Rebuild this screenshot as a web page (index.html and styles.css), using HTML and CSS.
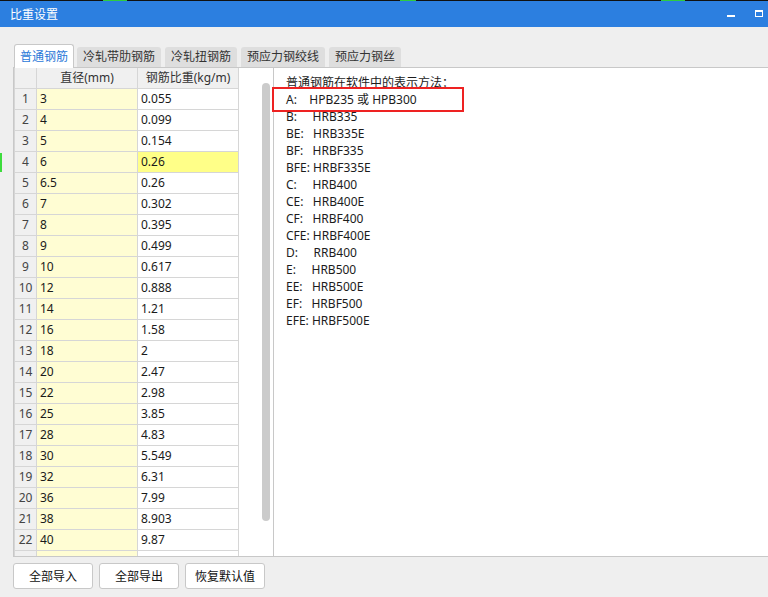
FILE: index.html
```html
<!DOCTYPE html>
<html lang="zh-CN">
<head>
    <meta charset="UTF-8">
    <title>比重设置</title>
    <link rel="stylesheet" href="styles.css">
</head>
<body>
    <div class="topline"></div>
    <div class="edge-mark"></div>

    <div class="titlebar">
        <span class="title">比重设置</span>
        <div class="win-btns">
            <span class="btn-min"></span>
            <span class="btn-max"></span>
        </div>
    </div>

    <div class="tabs">
        <div class="tab active">普通钢筋</div>
        <div class="tab">冷轧带肋钢筋</div>
        <div class="tab">冷轧扭钢筋</div>
        <div class="tab">预应力钢绞线</div>
        <div class="tab">预应力钢丝</div>
    </div>

    <div class="panel">
        <div class="left-pane">
            <div class="grid">
                <div class="hd"></div><div class="hd">直径(mm)</div><div class="hd">钢筋比重(kg/m)</div>
                <div class="no">1</div><div class="dia">3</div><div class="wt">0.055</div>
                <div class="no">2</div><div class="dia">4</div><div class="wt">0.099</div>
                <div class="no">3</div><div class="dia">5</div><div class="wt">0.154</div>
                <div class="no">4</div><div class="dia">6</div><div class="wt sel">0.26</div>
                <div class="no">5</div><div class="dia">6.5</div><div class="wt">0.26</div>
                <div class="no">6</div><div class="dia">7</div><div class="wt">0.302</div>
                <div class="no">7</div><div class="dia">8</div><div class="wt">0.395</div>
                <div class="no">8</div><div class="dia">9</div><div class="wt">0.499</div>
                <div class="no">9</div><div class="dia">10</div><div class="wt">0.617</div>
                <div class="no">10</div><div class="dia">12</div><div class="wt">0.888</div>
                <div class="no">11</div><div class="dia">14</div><div class="wt">1.21</div>
                <div class="no">12</div><div class="dia">16</div><div class="wt">1.58</div>
                <div class="no">13</div><div class="dia">18</div><div class="wt">2</div>
                <div class="no">14</div><div class="dia">20</div><div class="wt">2.47</div>
                <div class="no">15</div><div class="dia">22</div><div class="wt">2.98</div>
                <div class="no">16</div><div class="dia">25</div><div class="wt">3.85</div>
                <div class="no">17</div><div class="dia">28</div><div class="wt">4.83</div>
                <div class="no">18</div><div class="dia">30</div><div class="wt">5.549</div>
                <div class="no">19</div><div class="dia">32</div><div class="wt">6.31</div>
                <div class="no">20</div><div class="dia">36</div><div class="wt">7.99</div>
                <div class="no">21</div><div class="dia">38</div><div class="wt">8.903</div>
                <div class="no">22</div><div class="dia">40</div><div class="wt">9.87</div>
                <div class="no"></div><div class="dia"></div><div class="wt"></div>
            </div>
            <div class="thumb"></div>
        </div>

        <div class="right-pane">
            <div class="notes">普通钢筋在软件中的表示方法：
A:    HPB235 或 HPB300
B:     HRB335
BE:   HRB335E
BF:   HRBF335
BFE: HRBF335E
C:     HRB400
CE:   HRB400E
CF:   HRBF400
CFE: HRBF400E
D:     RRB400
E:     HRB500
EE:   HRB500E
EF:   HRBF500
EFE: HRBF500E</div>
            <div class="mark-box"></div>
        </div>
    </div>

    <div class="actions">
        <button>全部导入</button>
        <button>全部导出</button>
        <button>恢复默认值</button>
    </div>
</body>
</html>
```

FILE: styles.css
```css
body {
    margin: 0;
    background: #efefef;
    font-family: "Noto Sans", "Noto Sans CJK SC", sans-serif;
    font-size: 12px;
    color: #1a1a1a;
    height: 597px;
    overflow: hidden;
    position: relative;
}

.topline {
    height: 1px;
    background: linear-gradient(to right,
        #111 0, #111 103px, #2ecc40 103px, #2ecc40 127px,
        #111 127px, #111 400px, #2ecc40 400px, #2ecc40 416px,
        #111 416px, #111 661px, #2ecc40 661px, #2ecc40 685px, #111 685px);
}
.edge-mark {
    position: absolute;
    left: 0;
    top: 153px;
    width: 2px;
    height: 19px;
    background: #3ddc3d;
}

.titlebar {
    height: 26px;
    background: #2c7fe0;
    color: #fff;
    display: flex;
    align-items: center;
    justify-content: space-between;
    padding: 0 5px 0 10px;
}
.title {
    font-size: 12px;
    margin-top: -1px;
}
.win-btns {
    display: flex;
    align-items: flex-start;
    gap: 20px;
    height: 8px;
}
.btn-min {
    width: 8px;
    height: 2px;
    background: #fff;
    margin-top: 5px;
}
.btn-max {
    width: 6px;
    height: 4px;
    border: 1px solid #fff;
    border-top-width: 2px;
}

.tabs {
    height: 40px;
    display: flex;
    align-items: flex-end;
    gap: 4px;
    padding-left: 14px;
    position: relative;
    z-index: 1;
}
.tab {
    height: 20px;
    line-height: 20px;
    padding: 0 6px;
    background: #dedede;
    color: #333;
    border-radius: 3px 3px 0 0;
}
.tab.active {
    height: 23px;
    line-height: 24px;
    padding: 0 5px;
    background: #fff;
    color: #2b78d8;
    border: 1px solid #c8c8c8;
    border-bottom: none;
    margin-bottom: -1px;
    margin-right: -1px;
}

.panel {
    margin-left: 13px;
    height: 488px;
    border: 1px solid #c8c8c8;
    border-right: none;
    display: flex;
    background: #fff;
}

.left-pane {
    width: 259px;
    border-right: 1px solid #c8c8c8;
    display: flex;
    align-items: flex-start;
    overflow: hidden;
    flex-shrink: 0;
}
.grid {
    display: grid;
    grid-template-columns: 21px 100px 100px;
    grid-auto-rows: 20px;
    gap: 1px;
    padding: 0 1px;
    background: #d6d6d6;
    flex-shrink: 0;
}
.grid div {
    line-height: 20px;
    white-space: nowrap;
}
.hd {
    background: #f0f0f0;
    text-align: center;
    color: #333;
}
.no {
    background: #f0f0f0;
    text-align: center;
    color: #444;
}
.dia {
    background: #fffdd3;
    padding-left: 3px;
}
.wt {
    background: #fff;
    padding-left: 3px;
}
.wt.sel {
    background: #ffff88;
}
.thumb {
    width: 8px;
    height: 438px;
    margin: 15px 0 0 23px;
    border-radius: 4px;
    background: #cbcbcb;
    flex-shrink: 0;
}

.right-pane {
    flex: 1;
    position: relative;
}
.notes {
    white-space: pre;
    line-height: 17px;
    padding: 6px 0 0 12px;
    color: #1c1c1c;
}
.mark-box {
    position: absolute;
    left: -2px;
    top: 19px;
    width: 188px;
    height: 21px;
    border: 2px solid #ee2222;
}

.actions {
    display: flex;
    gap: 6px;
    padding: 6px 0 0 13px;
}
.actions button {
    width: 80px;
    height: 26px;
    background: #fff;
    border: 1px solid #c8c8c8;
    border-radius: 3px;
    font-family: "Noto Sans", "Noto Sans CJK SC", sans-serif;
    font-size: 12px;
    color: #111;
    padding: 0;
}
```
